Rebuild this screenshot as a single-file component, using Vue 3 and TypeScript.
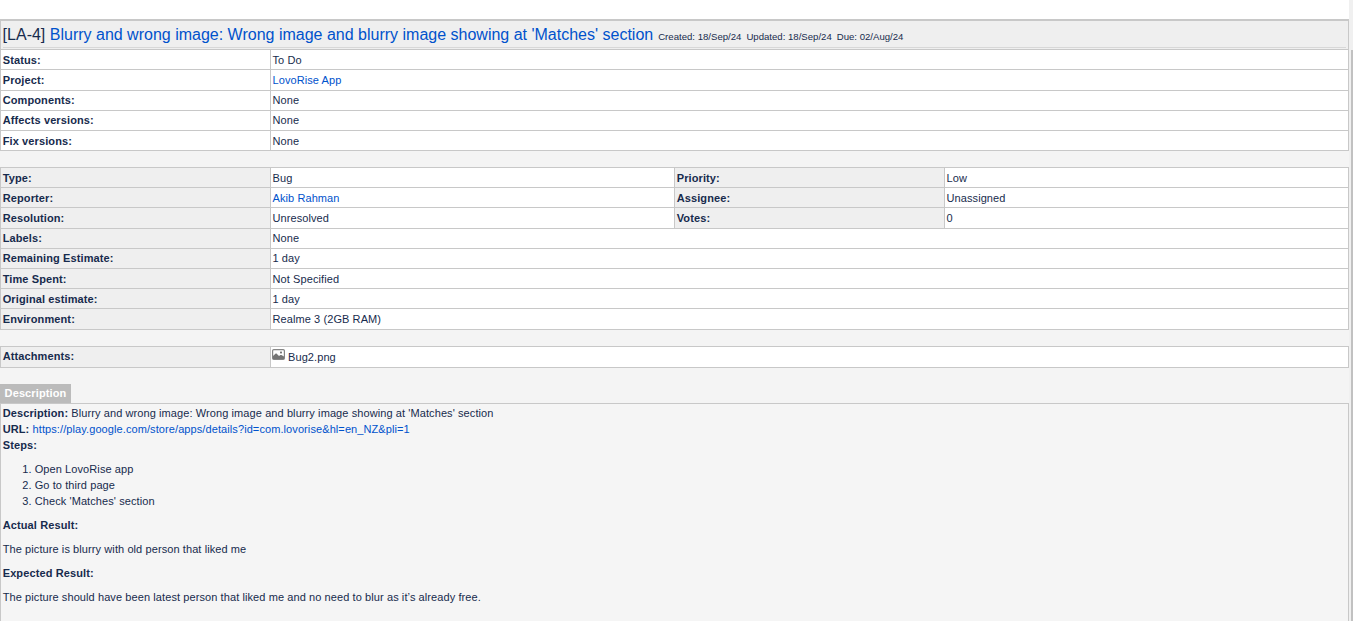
<script setup lang="ts">
interface Field {
  label: string
  value: string
  link?: boolean
}
interface Row {
  fields: Field[]
  height: number
  pad: number
}

const row = (height: number, pad: number, ...fields: Field[]): Row => ({ height, pad, fields })

const summary: Row[] = [
  row(20, 2, { label: 'Status:', value: 'To Do' }),
  row(21, 2, { label: 'Project:', value: 'LovoRise App', link: true }),
  row(20, 1, { label: 'Components:', value: 'None' }),
  row(20, 1, { label: 'Affects versions:', value: 'None' }),
  row(20, 2, { label: 'Fix versions:', value: 'None' }),
]

const details: Row[] = [
  row(20, 2, { label: 'Type:', value: 'Bug' }, { label: 'Priority:', value: 'Low' }),
  row(20, 2, { label: 'Reporter:', value: 'Akib Rahman', link: true }, { label: 'Assignee:', value: 'Unassigned' }),
  row(21, 2, { label: 'Resolution:', value: 'Unresolved' }, { label: 'Votes:', value: '0' }),
  row(20, 1, { label: 'Labels:', value: 'None' }),
  row(20, 1, { label: 'Remaining Estimate:', value: '1 day' }),
  row(20, 2, { label: 'Time Spent:', value: 'Not Specified' }),
  row(20, 2, { label: 'Original estimate:', value: '1 day' }),
  row(21, 2, { label: 'Environment:', value: 'Realme 3 (2GB RAM)' }),
]

const steps: string[] = ['Open LovoRise app', 'Go to third page', "Check 'Matches' section"]
</script>

<template>
  <div class="page">
    <main class="content">
      <div class="top-gap"></div>
      <section class="sheet plain">
        <header class="heading">
          <h3>
            <span class="title">[LA-4] <a>Blurry and wrong image: Wrong image and blurry image showing at 'Matches' section</a></span>
            <span class="dates"><span>Created: 18/Sep/24</span><span>Updated: 18/Sep/24</span><span>Due: 02/Aug/24</span></span>
          </h3>
        </header>
        <div v-for="r in summary" :key="r.fields[0].label" class="row" :style="{ height: r.height + 'px' }">
          <template v-for="f in r.fields" :key="f.label">
            <div class="label" :style="{ paddingTop: r.pad + 'px' }"><b>{{ f.label }}</b></div>
            <div class="value" :style="{ paddingTop: r.pad + 'px' }"><a v-if="f.link">{{ f.value }}</a><span v-else>{{ f.value }}</span></div>
          </template>
        </div>
      </section>

      <section class="sheet ruled">
        <div v-for="r in details" :key="r.fields[0].label" class="row" :class="{ double: r.fields.length > 1 }" :style="{ height: r.height + 'px' }">
          <template v-for="f in r.fields" :key="f.label">
            <div class="label" :style="{ paddingTop: r.pad + 'px' }"><b>{{ f.label }}</b></div>
            <div class="value" :style="{ paddingTop: r.pad + 'px' }"><a v-if="f.link">{{ f.value }}</a><span v-else>{{ f.value }}</span></div>
          </template>
        </div>
      </section>

      <section class="sheet ruled">
        <div class="row attachments">
          <div class="label"><b>Attachments:</b></div>
          <div class="value">
            <svg class="thumb" width="13" height="11" viewBox="0 0 13 11">
              <rect x=".6" y=".6" width="11.8" height="9.8" rx="1.2" fill="#fff" stroke="#858585" stroke-width="1.2" />
              <path d="M1 10V7l2.7-2.6h.8L7 7l1.4-1h1L12 7.4V10z" fill="#757575" />
              <rect x="8" y="2.4" width="2" height="2" rx=".6" fill="#757575" />
            </svg>
            <span>Bug2.png</span>
          </div>
        </div>
      </section>

      <div class="tab"><b>Description</b></div>
      <section class="description">
        <p><b>Description:</b> <span>Blurry and wrong image: Wrong image and blurry image showing at 'Matches' section</span><br />
          <b>URL:</b> <a>https://play.google.com/store/apps/details?id=com.lovorise&amp;hl=en_NZ&amp;pli=1</a><br />
          <b>Steps:</b></p>
        <ol>
          <li v-for="s in steps" :key="s">{{ s }}</li>
        </ol>
        <p><b>Actual Result:</b></p>
        <p>The picture is blurry with old person that liked me</p>
        <p><b>Expected Result:</b></p>
        <p>The picture should have been latest person that liked me and no need to blur as it’s already free.</p>
      </section>
    </main>
    <div class="scroll-track"><div class="scroll-thumb"></div></div>
  </div>
</template>

<style>
body {
  overflow: hidden;
  background: #f4f4f4;
}
</style>

<style scoped>
* {
  box-sizing: border-box;
}
.page {
  display: flex;
  height: 621px;
  overflow: hidden;
  background: #f4f4f4;
  color: #172b4d;
  font: 11px/16px "Liberation Sans", Arial, sans-serif;
  letter-spacing: 0.09px;
}
.content {
  width: 1349px;
}
.top-gap {
  height: 19px;
  background: #fff;
}
a {
  color: #0052cc;
}
b {
  letter-spacing: 0.11px;
}
.sheet {
  border: 1px solid #c8c8c8;
  border-bottom: 0;
  margin-bottom: 16px;
  background: #fff;
}
.plain {
  border-top-width: 2px;
}
.heading {
  height: 29px;
  padding: 0 2px;
  background: #efefef;
  border-bottom: 1px solid #c8c8c8;
}
h3 {
  display: flex;
  align-items: baseline;
  height: 27px;
  margin: 0;
  border-bottom: 1px solid #d8d8d8;
  font-size: 16px;
  font-weight: 400;
  line-height: 27px;
  white-space: nowrap;
}
.title {
  margin-left: -0.4px;
  letter-spacing: 0;
}
.dates {
  display: flex;
  gap: 5px;
  margin-left: 5px;
  font-size: 9.6px;
  letter-spacing: 0;
}
.row {
  display: grid;
  grid-template-columns: 269px 1fr;
  border-bottom: 1px solid #c8c8c8;
}
.double {
  grid-template-columns: 269px 404px 270px 1fr;
}
.label {
  padding-left: 1.7px;
}
.ruled .label {
  background: #efefef;
}
.value {
  padding-left: 1.5px;
  border-left: 1px solid #c8c8c8;
}
.value + .label {
  border-left: 1px solid #c8c8c8;
}
.attachments {
  height: 21px;
}
.attachments .label {
  padding-top: 1px;
}
.attachments .value {
  display: flex;
  gap: 3px;
  padding: 2px 0 0 1px;
}
.tab {
  width: 71px;
  height: 19px;
  padding: 1px 0 0 4.6px;
  background: #bbb;
  color: #fff;
}
.description {
  height: 240px;
  padding: 1px 1.7px;
  border: 1px solid #c8c8c8;
  background: #f5f5f5;
}
.description p {
  margin: 0 0 8px;
}
ol {
  margin: 0 0 8px;
  padding-left: 32px;
}
.scroll-track {
  width: 4px;
  padding: 50px 0 0 2px;
  background: #f0f0f0;
}
.scroll-thumb {
  height: 571px;
  background: #c1c1c1;
}
</style>
